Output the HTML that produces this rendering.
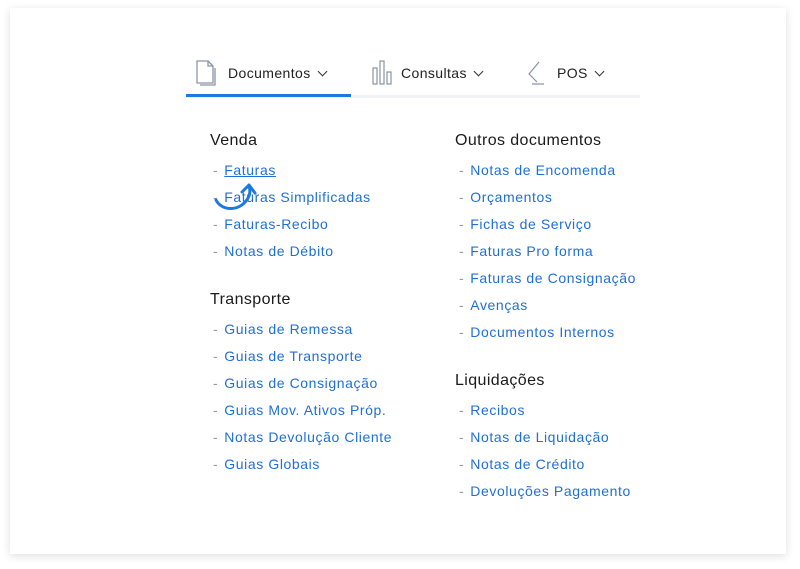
<!DOCTYPE html>
<html><head><style>
body{margin:0;width:800px;height:569px;background:#fff;font-family:"Liberation Sans",sans-serif;position:relative;overflow:hidden}
.card{position:absolute;left:10px;top:8px;width:776px;height:546px;background:#fff;box-shadow:0 2px 8px rgba(0,0,0,.13)}
.t{position:absolute;white-space:nowrap}
.nav{font-size:14px;color:#222;letter-spacing:.4px}
.h{font-size:16px;color:#1a1a1a;letter-spacing:.4px}
.l{font-size:14px;color:#1f6fd8;letter-spacing:.6px}
.l span{color:#999;margin-right:6px}
.ch{display:inline-block;width:6px;height:6px;border-right:1.3px solid #333;border-bottom:1.3px solid #333;transform:rotate(45deg);margin-left:8px;position:relative;top:-3px}
</style></head><body>
<div class="card"></div>
<div style="position:absolute;left:186px;top:95px;width:454px;height:3px;background:#f0f2f5"></div>
<div style="position:absolute;left:186px;top:94px;width:165px;height:3px;background:#1a7ae0"></div>
<svg style="position:absolute;left:195px;top:60px" width="22" height="26"><path d="M2 1h11l5 5v17H2z" fill="none" stroke="#8a94a6" stroke-width="1.3"/><path d="M13 1v5h5" fill="none" stroke="#8a94a6" stroke-width="1.3"/><path d="M5 25h15V8" fill="none" stroke="#8a94a6" stroke-width="1.3"/></svg>
<div class="t nav" style="left:228px;top:65px">Documentos<i class="ch"></i></div>
<svg style="position:absolute;left:372px;top:60px" width="20" height="26"><rect x="1" y="8" width="4" height="16" fill="none" stroke="#8a94a6" stroke-width="1.2"/><rect x="8" y="1" width="4" height="23" fill="none" stroke="#8a94a6" stroke-width="1.2"/><rect x="15" y="12" width="4" height="12" fill="none" stroke="#8a94a6" stroke-width="1.2"/></svg>
<div class="t nav" style="left:401px;top:65px">Consultas<i class="ch"></i></div>
<svg style="position:absolute;left:526px;top:60px" width="20" height="26"><path d="M13 2L3 14l8 8M6 24h12" fill="none" stroke="#8a94a6" stroke-width="1.2"/></svg>
<div class="t nav" style="left:557px;top:65px">POS<i class="ch"></i></div>

<div class="t h" style="left:210px;top:132px">Venda</div>
<div class="t l" style="left:213px;top:162px"><span>-</span><u>Faturas</u></div>
<div class="t l" style="left:213px;top:189px"><span>-</span>Faturas Simplificadas</div>
<div class="t l" style="left:213px;top:216px"><span>-</span>Faturas-Recibo</div>
<div class="t l" style="left:213px;top:243px"><span>-</span>Notas de Débito</div>
<div class="t h" style="left:210px;top:291px">Transporte</div>
<div class="t l" style="left:213px;top:321px"><span>-</span>Guias de Remessa</div>
<div class="t l" style="left:213px;top:348px"><span>-</span>Guias de Transporte</div>
<div class="t l" style="left:213px;top:375px"><span>-</span>Guias de Consignação</div>
<div class="t l" style="left:213px;top:402px"><span>-</span>Guias Mov. Ativos Próp.</div>
<div class="t l" style="left:213px;top:429px"><span>-</span>Notas Devolução Cliente</div>
<div class="t l" style="left:213px;top:456px"><span>-</span>Guias Globais</div>

<div class="t h" style="left:455px;top:132px">Outros documentos</div>
<div class="t l" style="left:459px;top:162px"><span>-</span>Notas de Encomenda</div>
<div class="t l" style="left:459px;top:189px"><span>-</span>Orçamentos</div>
<div class="t l" style="left:459px;top:216px"><span>-</span>Fichas de Serviço</div>
<div class="t l" style="left:459px;top:243px"><span>-</span>Faturas Pro forma</div>
<div class="t l" style="left:459px;top:270px"><span>-</span>Faturas de Consignação</div>
<div class="t l" style="left:459px;top:297px"><span>-</span>Avenças</div>
<div class="t l" style="left:459px;top:324px"><span>-</span>Documentos Internos</div>
<div class="t h" style="left:455px;top:372px">Liquidações</div>
<div class="t l" style="left:459px;top:402px"><span>-</span>Recibos</div>
<div class="t l" style="left:459px;top:429px"><span>-</span>Notas de Liquidação</div>
<div class="t l" style="left:459px;top:456px"><span>-</span>Notas de Crédito</div>
<div class="t l" style="left:459px;top:483px"><span>-</span>Devoluções Pagamento</div>

<svg style="position:absolute;left:212px;top:172px" width="50" height="44"><path d="M4 28c6 12 26 12 33-4 2-5 0-10 0-10" fill="none" stroke="#1a7ae0" stroke-width="3" stroke-linecap="round"/><path d="M30 20l7-7 6 8" fill="none" stroke="#1a7ae0" stroke-width="3" stroke-linecap="round" stroke-linejoin="round"/></svg>
</body></html>
